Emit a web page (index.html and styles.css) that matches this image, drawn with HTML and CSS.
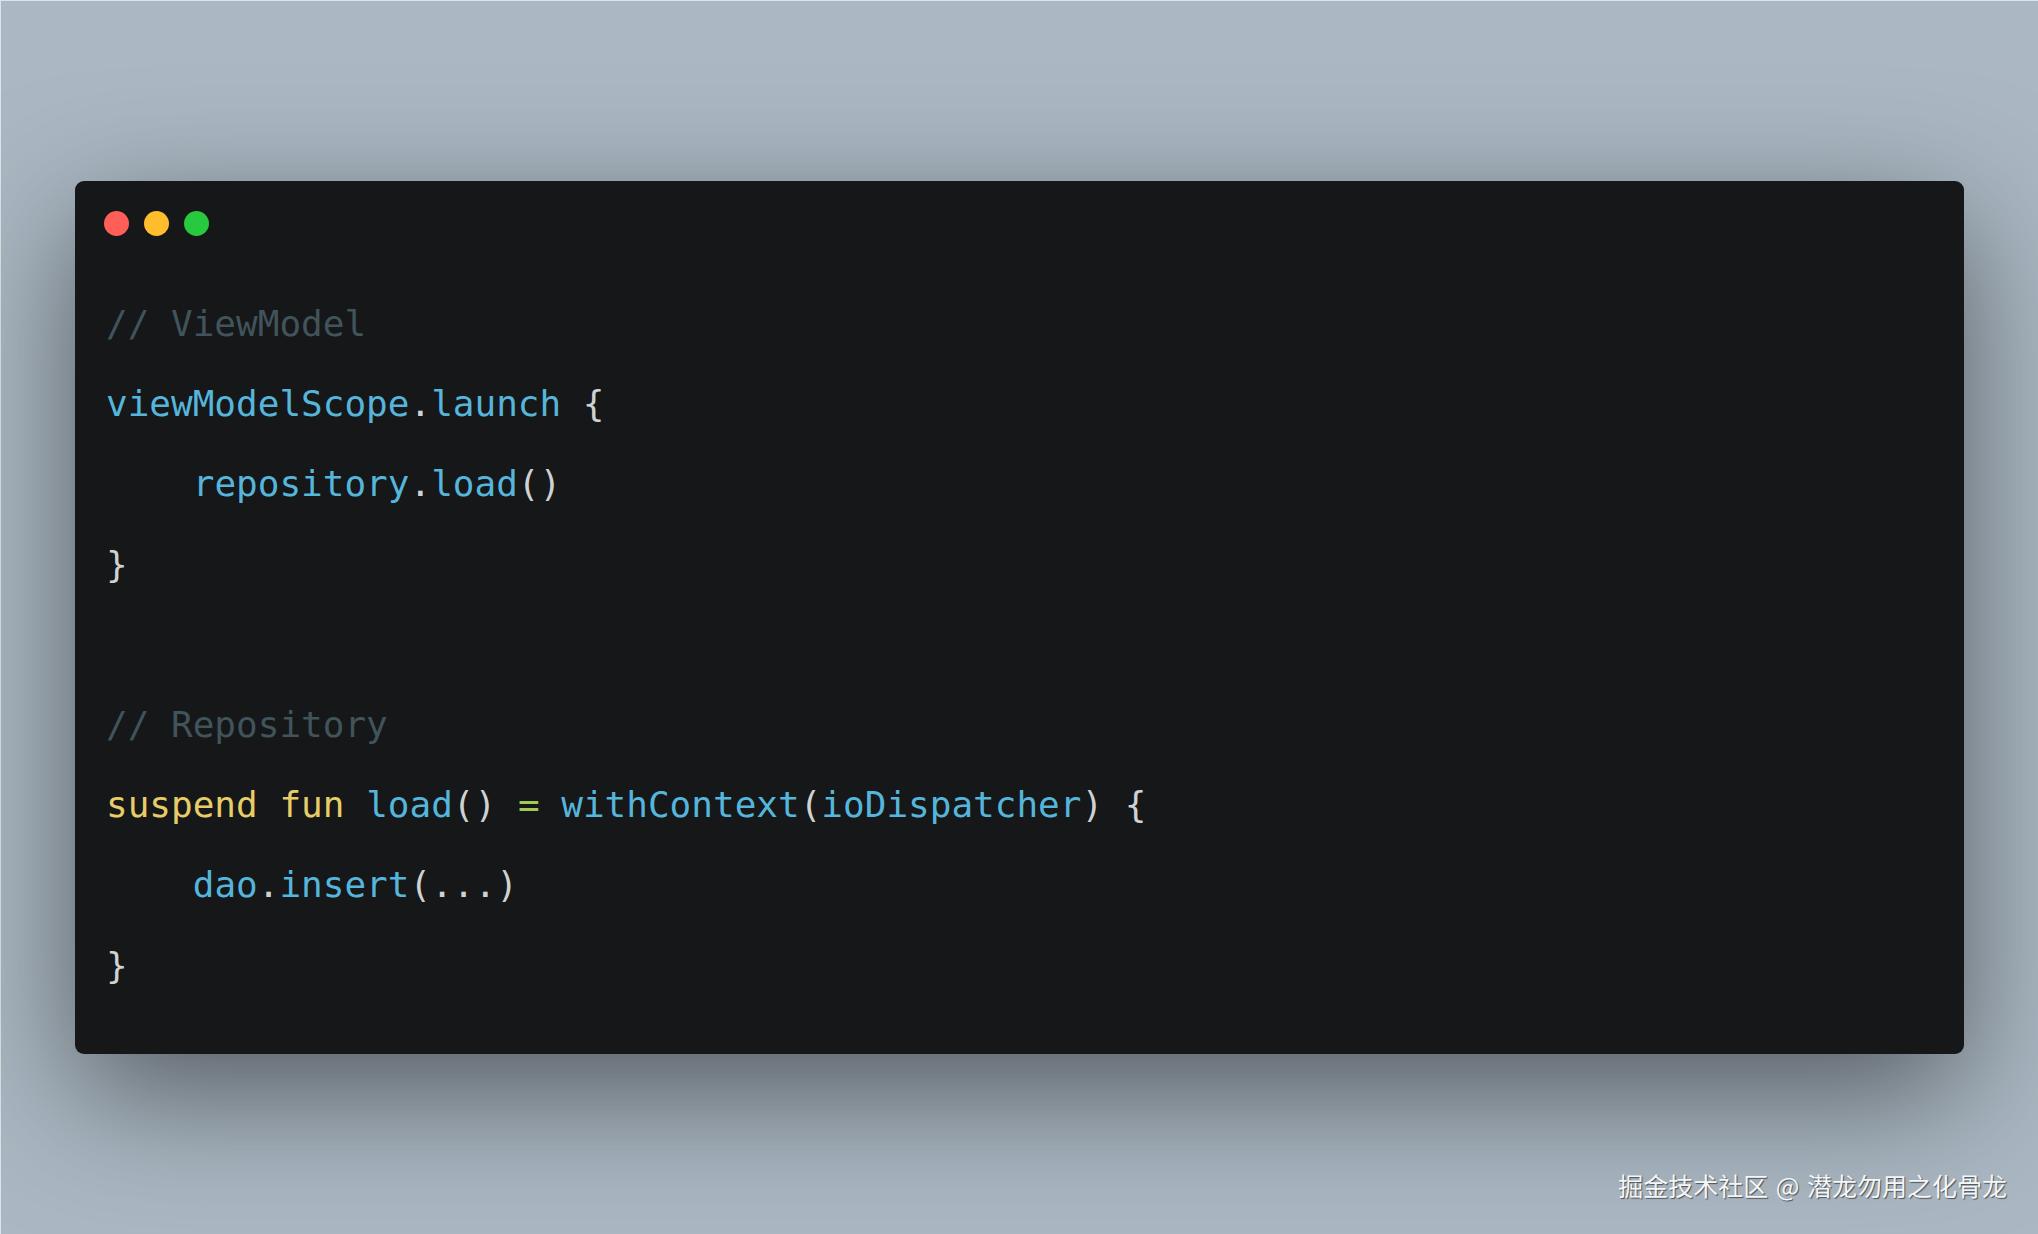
FILE: index.html
```html
<!DOCTYPE html>
<html lang="en">
<head>
<meta charset="utf-8">
<title>Code</title>
<link rel="stylesheet" href="styles.css">
</head>
<body>
<div class="page">
  <div class="window">
    <div class="controls">
      <span class="dot red"></span>
      <span class="dot yellow"></span>
      <span class="dot green"></span>
    </div>
<pre class="code"><span class="c">// ViewModel</span>
<span class="v">viewModelScope</span><span class="p">.</span><span class="v">launch</span> <span class="p">{</span>
    <span class="v">repository</span><span class="p">.</span><span class="v">load</span><span class="p">()</span>
<span class="p">}</span>

<span class="c">// Repository</span>
<span class="k">suspend</span> <span class="k">fun</span> <span class="v">load</span><span class="p">()</span> <span class="o">=</span> <span class="v">withContext</span><span class="p">(</span><span class="v">ioDispatcher</span><span class="p">)</span> <span class="p">{</span>
    <span class="v">dao</span><span class="p">.</span><span class="v">insert</span><span class="p">(...)</span>
<span class="p">}</span></pre>
  </div>
  <div class="watermark">掘金技术社区 @ 潜龙勿用之化骨龙</div>
</div>
</body>
</html>
```
FILE: styles.css
```css
html, body {
  margin: 0;
  padding: 0;
}
body {
  background: #abb8c3;
  overflow: hidden;
}
.page {
  position: relative;
  width: 2038px;
  height: 1234px;
  box-sizing: border-box;
  padding: 181px 74px 0 75px;
  background: #abb8c3;
  box-shadow: inset 1px 1px 0 #dde3e8;
}
.window {
  height: 873px;
  box-sizing: border-box;
  background: #151718;
  border-radius: 9px;
  padding: 30px 29px 0 29px;
  box-shadow: 0 40px 130px rgba(0, 0, 0, 0.5);
}
.controls {
  display: flex;
  gap: 15px;
  height: 25px;
}
.dot {
  width: 25px;
  height: 25px;
  border-radius: 50%;
  display: block;
}
.red { background: #ff5f56; }
.yellow { background: #ffbd2e; }
.green { background: #27c93f; }
.code {
  margin: 48px 0 0 2px;
  font-family: "DejaVu Sans Mono", monospace;
  font-size: 36px;
  line-height: 80.2px;
  color: #cfd2d1;
}
.c { color: #41535b; }
.v { color: #55b5db; }
.k { color: #e6cd69; }
.o { color: #9fca56; }
.p { color: #cfd2d1; }
.watermark {
  position: absolute;
  right: 31px;
  bottom: 31px;
  font-family: "Noto Sans CJK SC", sans-serif;
  font-size: 25px;
  word-spacing: 2px;
  color: #f4f6f8;
  text-shadow: 1px 1px 1px rgba(0, 0, 0, 0.55);
}
```
